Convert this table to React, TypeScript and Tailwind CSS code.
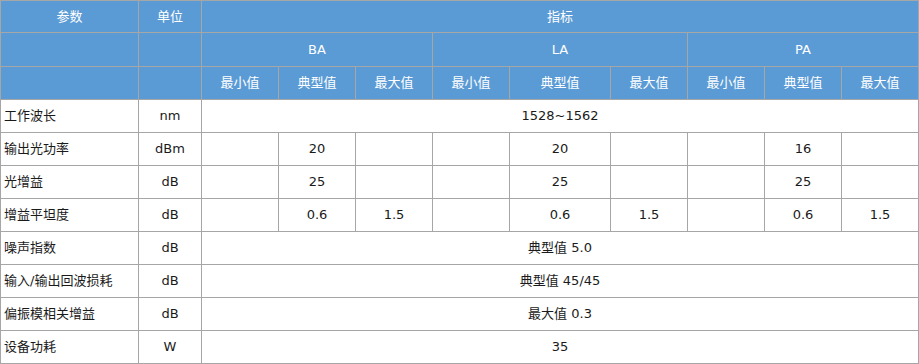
export default function App() {
  const groups = ["BA", "LA", "PA"];
  const sub = ["最小值", "典型值", "最大值"];

  const rows: { name: string; unit: string; span?: string; cells?: string[] }[] = [
    { name: "工作波长", unit: "nm", span: "1528~1562" },
    { name: "输出光功率", unit: "dBm", cells: ["", "20", "", "", "20", "", "", "16", ""] },
    { name: "光增益", unit: "dB", cells: ["", "25", "", "", "25", "", "", "25", ""] },
    { name: "增益平坦度", unit: "dB", cells: ["", "0.6", "1.5", "", "0.6", "1.5", "", "0.6", "1.5"] },
    { name: "噪声指数", unit: "dB", span: "典型值 5.0" },
    { name: "输入/输出回波损耗", unit: "dB", span: "典型值 45/45" },
    { name: "偏振模相关增益", unit: "dB", span: "最大值 0.3" },
    { name: "设备功耗", unit: "W", span: "35" },
  ];

  const th = "border border-[#a6a6a6] bg-[#5b9bd5] text-white text-center font-normal p-0";
  const td = "border border-[#a6a6a6] text-center p-0";

  return (
    <div className="bg-white w-[919px] h-[364px] font-['DejaVu_Sans','Noto_Sans_CJK_SC',sans-serif] text-[13px] text-[#1a1a1a]">
      <table className="border-collapse table-fixed w-[919px]">
        <colgroup>
          <col className="w-[138px]" />
          <col className="w-[63px]" />
          <col className="w-[77px]" />
          <col className="w-[77px]" />
          <col className="w-[77px]" />
          <col className="w-[77px]" />
          <col className="w-[101px]" />
          <col className="w-[77px]" />
          <col className="w-[77px]" />
          <col className="w-[77px]" />
          <col className="w-[77px]" />
        </colgroup>
        <thead>
          <tr className="h-[32px]">
            <th className={`${th} font-bold`}>参数</th>
            <th className={`${th} font-bold`}>单位</th>
            <th className={`${th} font-bold`} colSpan={9}>
              指标
            </th>
          </tr>
          <tr className="h-[34px]">
            <th className={th}></th>
            <th className={th}></th>
            {groups.map((g) => (
              <th key={g} className={th} colSpan={3}>
                {g}
              </th>
            ))}
          </tr>
          <tr className="h-[33px]">
            <th className={th}></th>
            <th className={th}></th>
            {groups.map((g) =>
              sub.map((s) => (
                <th key={g + s} className={th}>
                  {s}
                </th>
              ))
            )}
          </tr>
        </thead>
        <tbody>
          {rows.map((r) => (
            <tr key={r.name} className="h-[33px]">
              <td className={`${td} text-left pl-[3px]`}>{r.name}</td>
              <td className={td}>{r.unit}</td>
              {r.span ? (
                <td className={td} colSpan={9}>
                  {r.span}
                </td>
              ) : (
                r.cells!.map((c, i) => (
                  <td key={i} className={td}>
                    {c}
                  </td>
                ))
              )}
            </tr>
          ))}
        </tbody>
      </table>
    </div>
  );
}
